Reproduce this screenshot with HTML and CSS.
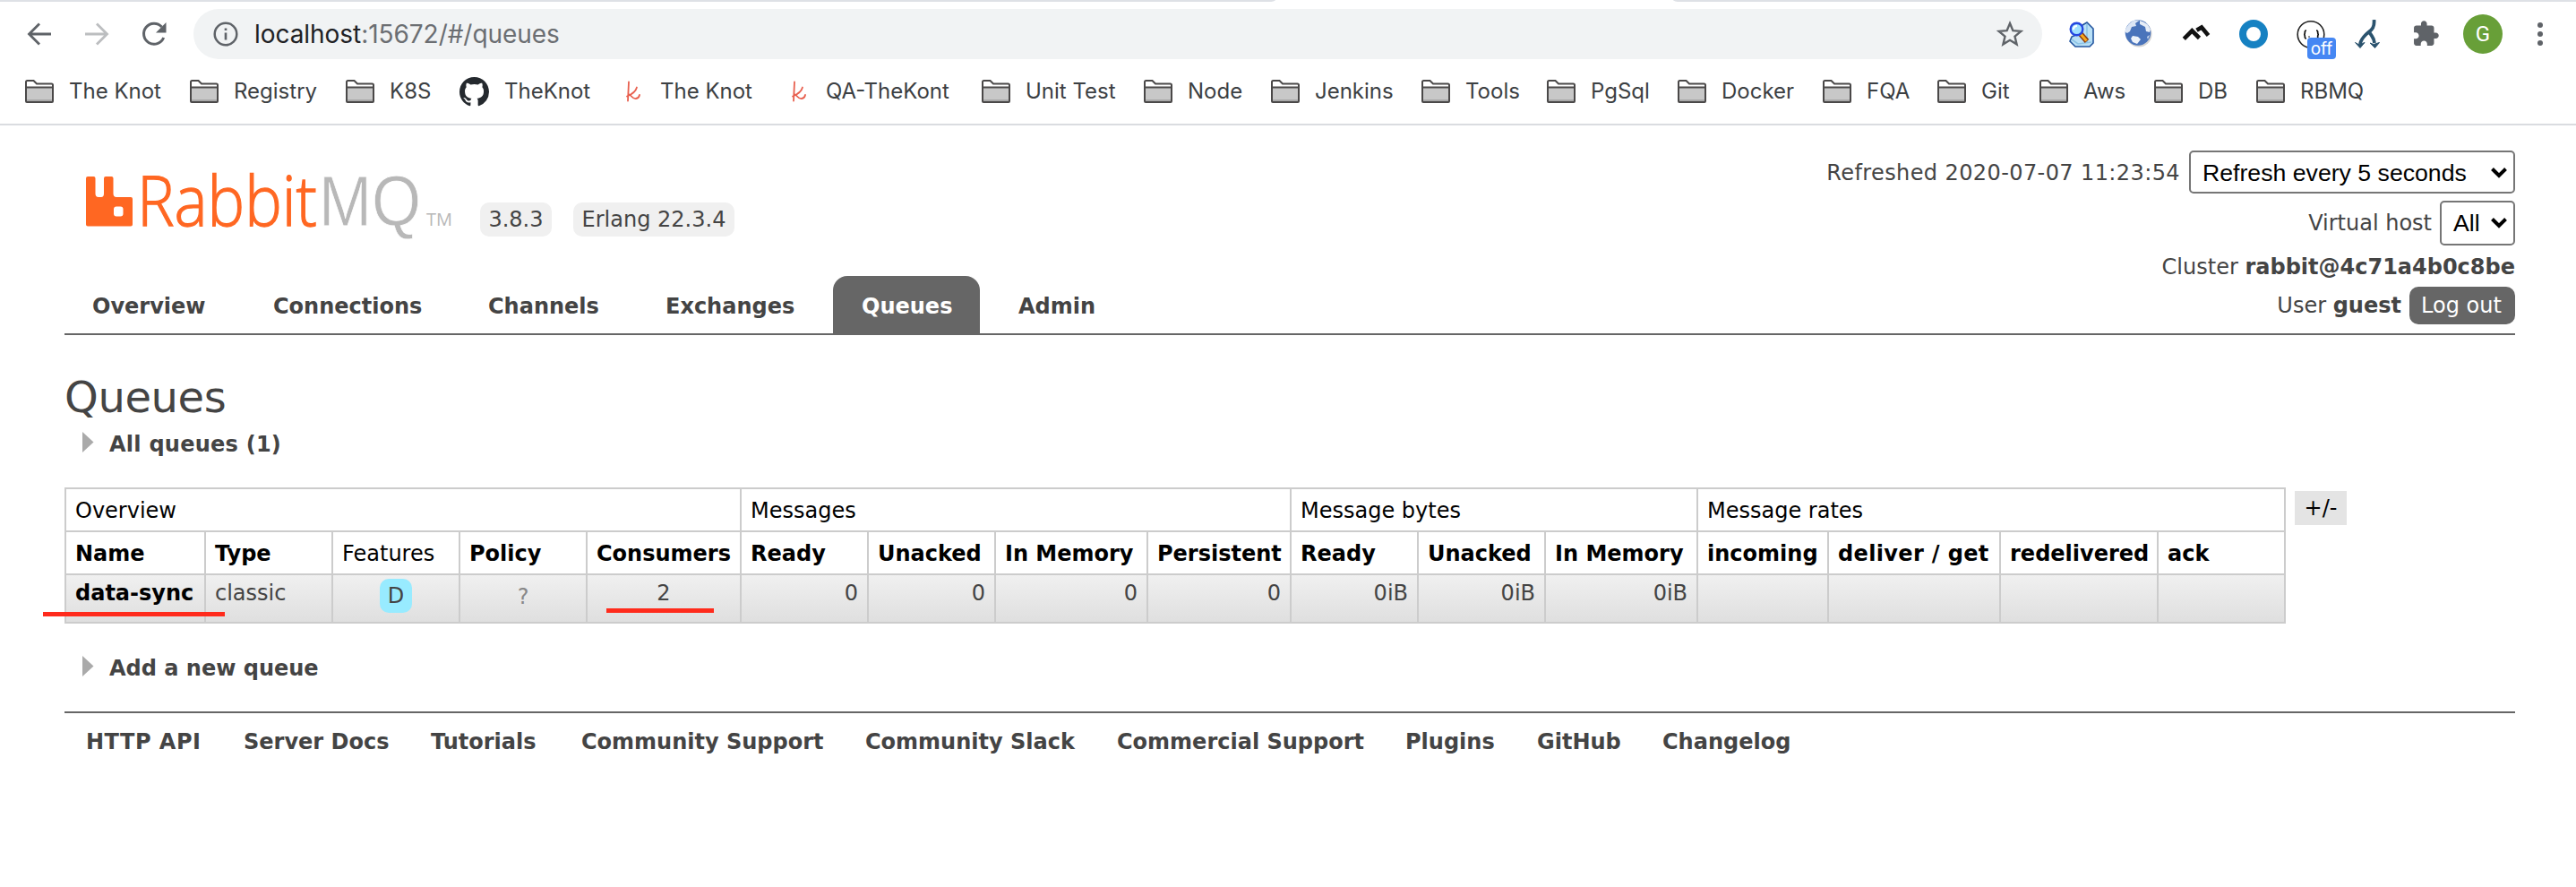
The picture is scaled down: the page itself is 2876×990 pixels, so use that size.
FILE: index.html
```
<!DOCTYPE html>
<html lang="en">
<head>
<meta charset="utf-8">
<title>RabbitMQ Management</title>
<link rel="stylesheet" href="styles.css">
</head>
<body>
<svg class="defs" width="0" height="0">
  <symbol id="folder" viewBox="0 0 32 26">
    <path d="M1 24V2.500Q1 1 2.500 1H9.500L13 5H29.500Q31 5 31 6.500V24Q31 25 30 25H2Q1 25 1 24Z" fill="#fff"/>
    <path d="M2 9H30V24H2Z" fill="#c8c8c8"/>
    <path d="M2 22H30V24H2Z" fill="#a9a9a9"/>
    <path d="M1 24V2.500Q1 1 2.500 1H9.500L13 4.500H29.500Q31 4.500 31 6V24Q31 25 30 25H2Q1 25 1 24ZM1 8.500H31" fill="none" stroke="#4a4848" stroke-width="2"/>
  </symbol>
  <symbol id="knot" viewBox="0 0 24 28">
    <path d="M4 3.500L3 24.500M2 19.500C7 17.500 12 13.500 13 9.500M4.500 17.500C7 18.500 8 22.500 12 22Q15.500 21.500 16 18" fill="none" stroke="#e8604f" stroke-width="1.800" stroke-linecap="round"/>
  </symbol>
</svg>

<div class="browser">
  <div class="tabstrip"><span class="strip-left"></span><span class="strip-right"></span></div>
  <div class="toolbar">
    <div class="nav-buttons">
      <svg width="32" height="32" viewBox="0 0 32 32"><path d="M29 16H5M16 4.500L4.500 16L16 27.500" fill="none" stroke="#5f6368" stroke-width="2.800"/></svg>
      <svg width="32" height="32" viewBox="0 0 32 32"><path d="M3 16H27M16 4.500L27.500 16L16 27.500" fill="none" stroke="#bcbec0" stroke-width="2.800"/></svg>
      <svg width="32" height="32" viewBox="0 0 32 32"><path d="M26.700 20A11.500 11.500 0 1 1 24.500 8" fill="none" stroke="#5f6368" stroke-width="3"/><path d="M29.500 3V14.500H18Z" fill="#5f6368"/></svg>
    </div>
    <div class="omnibox">
      <svg class="info" width="28" height="28" viewBox="0 0 28 28"><circle cx="14" cy="14" r="12.300" fill="none" stroke="#5f6368" stroke-width="2.500"/><path d="M12.700 12.500H15.300V20.500H12.700ZM12.700 7.500H15.300V10H12.700Z" fill="#5f6368"/></svg>
      <span class="url"><span class="host">localhost</span>:15672/#/queues</span>
      <svg class="star" width="32" height="32" viewBox="0 0 32 32"><path d="M16 4L19.400 12.100L28.300 12.900L21.500 18.700L23.600 27.400L16 22.800L8.400 27.400L10.500 18.700L3.700 12.900L12.600 12.100Z" fill="none" stroke="#5f6368" stroke-width="2.400"/></svg>
    </div>
    <div class="extensions">
      <span class="slot"><svg width="32" height="32" viewBox="0 0 32 32"><path d="M17 6L22 3L29 10V26L25 30H9L3 24L5 19L12 16Z" fill="#b9e0f6" stroke="#23559f" stroke-width="1.600"/><path d="M22 5V26M5 22L12 27L27 25" stroke="#8cc4e6" stroke-width="1.600" fill="none"/><path d="M15 16L22 24" stroke="#8a3a12" stroke-width="6"/><path d="M15 16L21.500 23.500" stroke="#f7a91d" stroke-width="3"/><circle cx="10.500" cy="10.500" r="6.800" fill="#9fe0ff" stroke="#2447e0" stroke-width="2.400"/><path d="M7 11Q7 7 11 7" stroke="#fff" stroke-width="2" fill="none"/></svg></span>
      <span class="slot"><svg width="32" height="32" viewBox="0 0 32 32"><circle cx="16" cy="16" r="14.500" fill="#d4d4d4"/><circle cx="15" cy="14.500" r="14.300" fill="#4a74bb"/><path d="M1 11Q4 4 10 1L17 .5L12 4L13 7L8 8L6 13L3 15L1 14Z" fill="#dce6f5"/><path d="M17 1Q26 3 29 11L28 14L24 13L23 8L17 5Z" fill="#e6edf7"/><path d="M9 18L15 19L18 22L14 27L9 25L7 21Z" fill="#eef3fa"/><path d="M25 19L28 17L26 22Z" fill="#cdd9ee"/></svg></span>
      <span class="slot"><svg width="32" height="32" viewBox="0 0 32 32"><path d="M2.300 21.300L11.300 12.300L19.500 20.500M16.500 11.800L22 8.500L29.500 17.500" fill="none" stroke="#111" stroke-width="4.600"/></svg></span>
      <span class="slot"><svg width="32" height="32" viewBox="0 0 32 32"><circle cx="16" cy="16" r="12" fill="none" stroke="#1681c2" stroke-width="8"/></svg></span>
      <span class="slot braces"><svg width="32" height="32" viewBox="0 0 32 32"><circle cx="16" cy="16.500" r="14.800" fill="#fff" stroke="#222" stroke-width="1.600"/><path d="M11 12Q9.300 12 9.300 13.500V15Q9.300 16.500 8 16.500Q9.300 16.500 9.300 18V19.500Q9.300 21 11 21M22 12Q23.700 12 23.700 13.500V15Q23.700 16.500 25 16.500Q23.700 16.500 23.700 18V20" fill="none" stroke="#111" stroke-width="1.700"/><circle cx="14" cy="19" r=".8" fill="#111"/></svg><span class="off">off</span></span>
      <span class="slot"><svg width="32" height="32" viewBox="0 0 32 32"><path d="M22.500 0C23.500 11 18 12 13 17C10 20 8 22 7 27M18 15C21 20 22.500 20 23 26" fill="none" stroke="#2b536e" stroke-width="3.800"/><path d="M1.500 25.500L5 27.500L9.500 26.500L12 25.500L7 31.500ZM18 26L22 27.500L28.500 25.500L23.500 31.500Z" fill="#2b536e" stroke="#2b536e"/></svg></span>
      <span class="slot"><svg width="36" height="36" viewBox="0 0 24 24"><path d="M20.500 11H19V7c0-1.100-.9-2-2-2h-4V3.500C13 2.120 11.880 1 10.500 1S8 2.120 8 3.500V5H4c-1.100 0-1.990.9-1.990 2v3.800H3.500c1.490 0 2.700 1.210 2.700 2.700s-1.210 2.700-2.700 2.700H2V20c0 1.100.9 2 2 2h3.800v-1.500c0-1.490 1.210-2.700 2.700-2.700s2.700 1.210 2.700 2.700V22H17c1.100 0 2-.9 2-2v-4h1.500c1.380 0 2.500-1.120 2.500-2.500S21.880 11 20.500 11z" fill="#5f6368" transform="translate(1.600 1.300) scale(.88)"/></svg></span>
      <span class="slot"><span class="avatar">G</span></span>
      <span class="slot"><svg width="8" height="28" viewBox="0 0 8 28"><circle cx="4" cy="4" r="3" fill="#5f6368"/><circle cx="4" cy="14" r="3" fill="#5f6368"/><circle cx="4" cy="24" r="3" fill="#5f6368"/></svg></span>
    </div>
  </div>
  <div class="bookmarks">
    <span class="bm"><svg class="fi"><use href="#folder"/></svg>The Knot</span>
    <span class="bm"><svg class="fi"><use href="#folder"/></svg>Registry</span>
    <span class="bm"><svg class="fi"><use href="#folder"/></svg>K8S</span>
    <span class="bm"><svg class="gh" width="33" height="33" viewBox="0 0 16 16"><path fill="#24292e" d="M8 0C3.580 0 0 3.580 0 8c0 3.540 2.290 6.530 5.470 7.590.4.070.55-.17.55-.38 0-.19-.01-.82-.01-1.490-2.010.37-2.530-.49-2.690-.94-.09-.23-.48-.94-.82-1.130-.28-.15-.68-.52-.01-.53.63-.01 1.080.58 1.230.82.72 1.210 1.870.87 2.330.66.07-.52.28-.87.51-1.070-1.780-.2-3.640-.89-3.640-3.950 0-.87.31-1.590.82-2.150-.08-.2-.36-1.020.08-2.120 0 0 .67-.21 2.200.82.64-.18 1.320-.27 2-.27s1.360.09 2 .27c1.530-1.040 2.200-.82 2.200-.82.44 1.100.16 1.920.08 2.120.51.56.82 1.270.82 2.150 0 3.070-1.870 3.750-3.650 3.950.29.25.54.73.54 1.480 0 1.070-.01 1.930-.01 2.200 0 .21.15.46.55.38A8.010 8.010 0 0 0 16 8c0-4.420-3.580-8-8-8z"/></svg>TheKnot</span>
    <span class="bm"><svg class="ki"><use href="#knot"/></svg>The Knot</span>
    <span class="bm"><svg class="ki"><use href="#knot"/></svg>QA-TheKont</span>
    <span class="bm"><svg class="fi"><use href="#folder"/></svg>Unit Test</span>
    <span class="bm"><svg class="fi"><use href="#folder"/></svg>Node</span>
    <span class="bm"><svg class="fi"><use href="#folder"/></svg>Jenkins</span>
    <span class="bm"><svg class="fi"><use href="#folder"/></svg>Tools</span>
    <span class="bm"><svg class="fi"><use href="#folder"/></svg>PgSql</span>
    <span class="bm"><svg class="fi"><use href="#folder"/></svg>Docker</span>
    <span class="bm"><svg class="fi"><use href="#folder"/></svg>FQA</span>
    <span class="bm"><svg class="fi"><use href="#folder"/></svg>Git</span>
    <span class="bm"><svg class="fi"><use href="#folder"/></svg>Aws</span>
    <span class="bm"><svg class="fi"><use href="#folder"/></svg>DB</span>
    <span class="bm"><svg class="fi"><use href="#folder"/></svg>RBMQ</span>
  </div>
</div>

<div class="page">
  <header class="header">
    <div class="left">
      <div class="brand">
        <svg class="logo" width="420" height="118" viewBox="0 -35 420 118">
          <path d="M2 2H8.500Q10.500 2 10.500 4V21Q10.500 25 14 25H17Q20 25 20 21V4Q20 2 22 2H28.500Q30.500 2 30.500 4V21Q30.500 25 34 25H50Q52 25 52 27V55.500Q52 57.500 50 57.500H2Q0 57.500 0 55.500V4Q0 2 2 2ZM34 35.500Q31 35.500 31 38.500V43.500Q31 46.500 34 46.500H38.500Q41.500 46.500 41.500 43.500V38.500Q41.500 35.500 38.500 35.500Z" fill="#ff6722" fill-rule="evenodd"/>
          <text class="logo-rabbit" x="57" y="57" textLength="201" lengthAdjust="spacingAndGlyphs">Rabbit</text>
          <text class="logo-mq" x="260" y="57" textLength="114" lengthAdjust="spacingAndGlyphs">MQ</text>
          <text class="logo-tm" x="380" y="57" textLength="29" lengthAdjust="spacingAndGlyphs">TM</text>
        </svg>
        <span class="badge ver">3.8.3</span>
        <span class="badge erl">Erlang 22.3.4</span>
      </div>
      <nav class="tabs">
        <a class="tab">Overview</a>
        <a class="tab">Connections</a>
        <a class="tab">Channels</a>
        <a class="tab">Exchanges</a>
        <a class="tab active">Queues</a>
        <a class="tab">Admin</a>
      </nav>
    </div>
    <div class="status">
      <div class="line refresh"><span class="stamp">Refreshed 2020-07-07 11:23:54</span><span class="select wide"><span>Refresh every 5 seconds</span><svg width="20" height="14" viewBox="0 0 20 14"><path d="M2.500 2.500L10 10L17.500 2.500" fill="none" stroke="#000" stroke-width="4"/></svg></span></div>
      <div class="line vhost"><span>Virtual host</span><span class="select small"><span>All</span><svg width="20" height="14" viewBox="0 0 20 14"><path d="M2.500 2.500L10 10L17.500 2.500" fill="none" stroke="#000" stroke-width="4"/></svg></span></div>
      <div class="line cluster"><span>Cluster <b>rabbit@4c71a4b0c8be</b></span></div>
      <div class="line user"><span>User <b>guest</b></span><span class="logout">Log out</span></div>
    </div>
  </header>

  <main>
    <h1>Queues</h1>
    <h2 class="all"><svg width="14" height="24" viewBox="0 0 14 24"><path d="M0 0L12.500 11.500L0 23Z" fill="#aaa"/></svg>All queues (1)</h2>
    <div class="table-row">
      <table>
        <colgroup><col class="c156"><col class="c142"><col class="c142"><col class="c142"><col class="c172"><col class="c142"><col class="c142"><col class="c170"><col class="c160"><col class="c142"><col class="c142"><col class="c170"><col class="c146"><col class="c192"><col class="c176"><col class="c142"></colgroup>
        <tr class="groups"><th colspan="5">Overview</th><th colspan="4">Messages</th><th colspan="3">Message bytes</th><th colspan="4">Message rates</th></tr>
        <tr class="heads"><th>Name</th><th>Type</th><th class="plain">Features</th><th>Policy</th><th>Consumers</th><th>Ready</th><th>Unacked</th><th>In Memory</th><th>Persistent</th><th>Ready</th><th>Unacked</th><th>In Memory</th><th>incoming</th><th class="deliver">deliver / get</th><th>redelivered</th><th>ack</th></tr>
        <tr class="data"><td class="name">data-sync</td><td>classic</td><td class="c drop"><span class="feature">D</span></td><td class="c none">?</td><td class="c">2</td><td class="r">0</td><td class="r">0</td><td class="r">0</td><td class="r">0</td><td class="r">0iB</td><td class="r">0iB</td><td class="r">0iB</td><td></td><td></td><td></td><td></td></tr>
      </table>
      <span class="plusminus">+/-</span>
      <span class="mark mark-name"></span>
      <span class="mark mark-consumers"></span>
    </div>
    <h2 class="add"><svg width="14" height="24" viewBox="0 0 14 24"><path d="M0 0L12.500 11.500L0 23Z" fill="#aaa"/></svg>Add a new queue</h2>
  </main>

  <footer>
    <a class="api">HTTP API</a><a>Server Docs</a><a>Tutorials</a><a>Community Support</a><a>Community Slack</a><a>Commercial Support</a><a>Plugins</a><a>GitHub</a><a>Changelog</a>
  </footer>
</div>
</body>
</html>
```
FILE: styles.css
```
* { box-sizing: border-box; }
body { margin: 0; background: #fff; color: #444; font: 24px/28px "DejaVu Sans", Verdana, sans-serif; white-space: nowrap; overflow: hidden; height: 990px; }
.defs { display: block; position: absolute; }

/* browser chrome */
.browser { height: 140px; border-bottom: 2px solid #dadce0; font-family: Inter, sans-serif; }
.tabstrip { display: flex; justify-content: space-between; height: 2px; }
.strip-left { width: 1424px; background: #dee1e6; border-bottom-right-radius: 8px 2px; }
.strip-right { width: 1008px; background: #dee1e6; border-bottom-left-radius: 8px 2px; }
.toolbar { display: flex; align-items: center; height: 72px; }
.nav-buttons { display: flex; width: 216px; padding-left: 28px; gap: 32px; }
.nav-buttons svg { display: block; }
.omnibox { display: flex; align-items: center; width: 2064px; height: 56px; padding: 0 20px 0 22px; border-radius: 28px; background: #f1f3f4; }
.url { flex: 1; margin-left: 18px; font-size: 28px; line-height: 32px; letter-spacing: -.05px; color: #6b6e72; }
.host { color: #202124; }
.extensions { display: flex; margin-left: 12px; }
.slot { display: flex; align-items: center; justify-content: center; width: 64px; height: 64px; position: relative; }
.off { position: absolute; left: 28px; top: 36px; width: 32px; height: 24px; border-radius: 4px; background: #4587f3; color: #fff; font-size: 19px; line-height: 26px; text-align: center; }
.avatar { width: 44px; height: 44px; border-radius: 50%; background: #689f38; color: #fff; font: 24px/44px Roboto, sans-serif; text-align: center; }
.bookmarks { display: grid; grid-template-columns: 184px 174px 127px 185px 185px 213px 181px 142px 168px 140px 146px 162px 128px 114px 128px 114px 200px; align-items: center; height: 56px; padding-left: 28px; color: #3c4043; line-height: 30px; }
.bm { display: flex; align-items: center; }
.fi { width: 32px; height: 26px; margin-right: 17px; }
.gh { margin: 0 17px 0 0; }
.ki { width: 24px; height: 28px; margin-right: 15px; }

/* management page */
.page { padding: 0 68px 0 72px; }
.header { display: flex; justify-content: space-between; height: 234px; border-bottom: 2px solid #666; }
.brand { display: flex; align-items: flex-start; height: 168px; padding: 20px 0 0 24px; }
.logo { display: block; width: 420px; }
.logo-rabbit { font-family: "Open Sans", sans-serif; font-weight: 300; font-size: 78px; fill: #ff6722; stroke: #ff6722; stroke-width: 1.3px; }
.logo-mq { font-family: "Liberation Sans", Arial, sans-serif; font-size: 80px; fill: #b8b8b8; stroke: #fff; stroke-width: .8px; }
.logo-tm { fill: #b8b8b8; font-family: "Open Sans", sans-serif; font-size: 20px; }
.badge { height: 38px; margin-top: 66px; padding: 5px 0; border-radius: 10px; background: #f0f0f0; text-align: center; }
.ver { width: 80px; margin-left: 20px; }
.erl { width: 180px; margin-left: 24px; }
.tabs { display: grid; grid-template-columns: 202px 239px 198px 219px 175px 164px; height: 64px; }
.tab { padding: 20px 32px 0; font-weight: bold; }
.tab:nth-child(-n+2) { padding-left: 31px; }
.active { width: 164px; background: #666; color: #fff; border-radius: 16px 16px 0 0; }
.status { display: flex; flex-direction: column; align-items: flex-end; padding-top: 28px; }
.line { display: flex; align-items: center; }
.stamp { padding-top: 2px; letter-spacing: .4px; }
.select { display: flex; align-items: center; justify-content: space-between; border: 2px solid #767676; border-radius: 5px; padding: 0 6px 0 13px; color: #000; font: 26.670px/30px "Liberation Sans", Arial, sans-serif; }
.wide { width: 364px; height: 48px; margin-left: 10px; padding-top: 2px; }
.small { width: 84px; height: 50px; margin-left: 9px; }
.vhost { margin-top: 8px; }
.cluster { margin-top: 10px; }
.user { margin-top: 8px; }
.logout { width: 118px; height: 42px; margin-left: 9px; padding: 7px 2px 0 0; border-radius: 10px; background: #666; color: #fff; text-align: center; }
h1 { margin: 41px 0 0; font-size: 48px; line-height: 56px; font-weight: normal; letter-spacing: -.4px; }
h2 { display: flex; align-items: center; margin: 11px 0 0; padding-left: 20px; font-size: 24px; line-height: 28px; font-weight: bold; }
h2 svg { margin: -4px 16px 0 0; }
.all { letter-spacing: .25px; }
.table-row { display: flex; align-items: flex-start; position: relative; margin-top: 34px; }
table { table-layout: fixed; width: 2480px; border-collapse: separate; border-spacing: 0; border-right: 2px solid #ccc; border-bottom: 2px solid #ccc; }
.c156 { width: 156px; } .c142 { width: 142px; } .c172 { width: 172px; } .c170 { width: 170px; } .c160 { width: 160px; } .c146 { width: 146px; } .c192 { width: 192px; } .c176 { width: 176px; }
th, td { border-left: 2px solid #ccc; border-top: 2px solid #ccc; text-align: left; vertical-align: top; }
th { height: 48px; padding: 10px 0 0 10px; color: #000; }
.groups th, .plain { font-weight: normal; }
.deliver { letter-spacing: .35px; }
td { height: 54px; padding: 6px 10px 0; background: linear-gradient(#f0f0f0, #dfdfdf); }
.name { color: #000; font-weight: bold; }
.c { text-align: center; }
.r { text-align: right; }
.drop { padding-top: 4px; }
.feature { display: inline-block; width: 36px; height: 38px; padding-top: 5px; border-radius: 10px; background: #98ebff; }
.none { padding-top: 10px; color: #888; }
.plusminus { width: 58px; height: 38px; margin: 4px 0 0 10px; padding-top: 5px; background: #e4e4e4; color: #000; text-align: center; }
.mark { position: absolute; height: 5px; background: #ff2b1c; }
.mark-name { left: -24px; top: 139px; width: 203px; }
.mark-consumers { left: 605px; top: 135px; width: 120px; }
.add { margin-top: 36px; }
footer { display: grid; grid-template-columns: 176px 209px 168px 317px 281px 322px 147px 140px 200px; margin-top: 34px; padding: 18px 0 0 24px; border-top: 2px solid #666; font-weight: bold; }
.api { letter-spacing: .5px; }
```
